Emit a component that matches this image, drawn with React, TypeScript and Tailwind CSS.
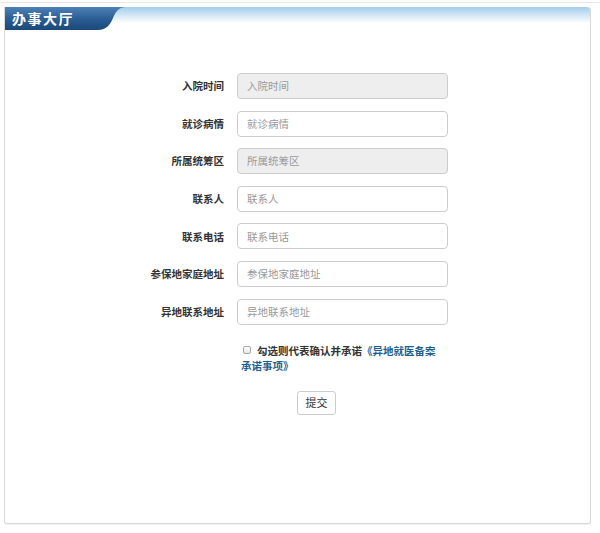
import React from "react";

const rows: { label: string; disabled?: boolean }[] = [
  { label: "入院时间", disabled: true },
  { label: "就诊病情" },
  { label: "所属统筹区", disabled: true },
  { label: "联系人" },
  { label: "联系电话" },
  { label: "参保地家庭地址" },
  { label: "异地联系地址" },
];

export default function App() {
  return (
    <div
      className="w-[600px] h-[533px] bg-white overflow-hidden"
      style={{ fontFamily: '"Noto Sans CJK SC", "Liberation Sans", sans-serif' }}
    >
      <div className="h-px bg-[#e8e8e8] mt-[2px]" />
      <div className="ml-[4px] mr-[9px] mt-[4px] h-[517px] border-x border-b border-[#d8d8d8] rounded-b-[3px] rounded-tr-[3px] shadow-[0_1px_1px_rgba(0,0,0,0.06)]">
        {/* header */}
        <div className="flex h-[23px]">
          <div className="w-[93px] h-[23px] bg-gradient-to-b from-[#4d80b6] via-[#2b5f96] to-[#1b4879] flex items-center pl-[7px] pb-[1px]">
            <span className="text-white font-bold text-[14px] tracking-[1.5px] leading-none">办事大厅</span>
          </div>
          <svg width="28" height="23" viewBox="0 0 28 23" className="shrink-0 block">
            <defs>
              <linearGradient id="tabg" x1="0" y1="0" x2="0" y2="1">
                <stop offset="0" stopColor="#4d80b6" />
                <stop offset="0.5" stopColor="#2b5f96" />
                <stop offset="1" stopColor="#1b4879" />
              </linearGradient>
              <linearGradient id="bandg" x1="0" y1="0" x2="0" y2="1">
                <stop offset="0" stopColor="#a3cdea" />
                <stop offset="1" stopColor="#ffffff" />
              </linearGradient>
            </defs>
            <rect x="0" y="0" width="28" height="16" fill="url(#bandg)" />
            <path d="M0,0 H28 C21,0 18,4 15,11 C12,19 7,23 0,23 Z" fill="url(#tabg)" />
          </svg>
          <div className="flex-1 h-[16px] bg-gradient-to-b from-[#a3cdea] to-white rounded-tr-[3px]" />
        </div>

        {/* form */}
        <div className="pt-[43px] flex flex-col gap-[11.6px]">
          {rows.map((r) => (
            <div key={r.label} className="flex items-center h-[26px]">
              <div className="w-[219px] text-right text-[10.5px] font-bold text-[#333]">{r.label}</div>
              <div
                className={
                  "ml-[13px] w-[211px] h-[26px] border border-[#cccccc] rounded-[4px] flex items-center pl-[9px] text-[10.5px] text-[#999] " +
                  (r.disabled ? "bg-[#eeeeee]" : "bg-white")
                }
              >
                {r.label}
              </div>
            </div>
          ))}
        </div>

        <div className="ml-[236px] mt-[18px] w-[200px] text-[10.5px] font-bold leading-[15px] text-[#333]">
          <div className="flex items-center">
            <span className="inline-block w-[8px] h-[8px] border border-[#a8a8a8] rounded-[2px] bg-gradient-to-b from-white to-[#e6e6e6] mr-[6px] ml-[2px]" />
            <span>勾选则代表确认并承诺</span>
            <span className="text-[#1f5f8e]">《异地就医备案</span>
          </div>
          <div className="text-[#1f5f8e]">承诺事项》</div>
        </div>

        <div className="ml-[292px] mt-[18px]">
          <div className="w-[39px] h-[24px] border border-[#cccccc] rounded-[3px] flex items-center justify-center text-[11px] text-[#333] bg-white">
            提交
          </div>
        </div>
      </div>
    </div>
  );
}
